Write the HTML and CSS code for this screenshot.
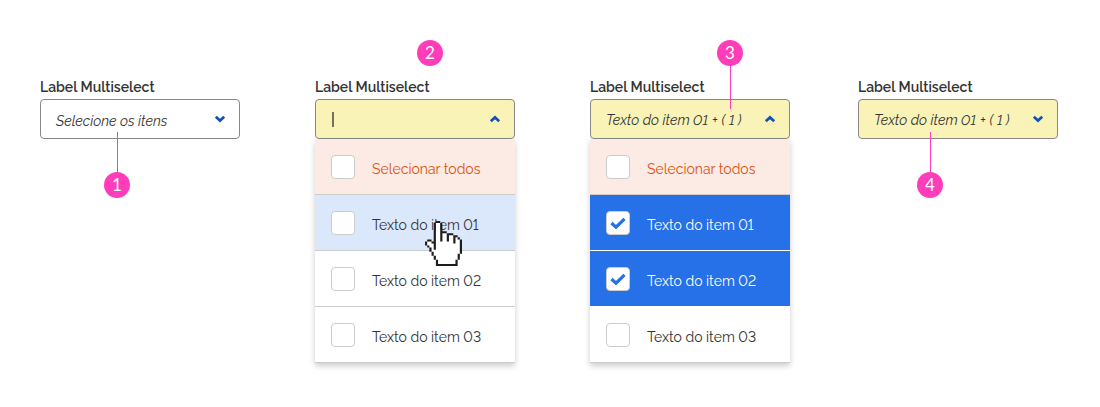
FILE: index.html
```html
<!DOCTYPE html>
<html lang="pt-BR">
<head>
<meta charset="utf-8">
<title>Multiselect</title>
<link rel="stylesheet" href="styles.css">
</head>
<body>
<svg class="defs" width="0" height="0">
  <symbol id="down" viewBox="0 0 12 8"><path d="M1.8 1.8 6 5.6l4.2-3.8" fill="none" stroke="#1351b4" stroke-width="2.7"/></symbol>
  <symbol id="up" viewBox="0 0 12 8"><path d="M1.8 6.2 6 2.4l4.2 3.8" fill="none" stroke="#1351b4" stroke-width="2.7"/></symbol>
  <symbol id="check" viewBox="0 0 16 12"><path d="M1.5 6 6 10.2 14.5 1.8" fill="none" stroke="#2670e8" stroke-width="3.2"/></symbol>
</svg>
<main class="board">
  <section class="select">
    <div class="label">Label Multiselect</div>
    <div class="field"><span class="value placeholder">Selecione os itens</span><svg class="chevron"><use href="#down"/></svg></div>
    <div class="pin below first"><i class="line"></i><b class="dot">1</b></div>
  </section>

  <section class="select">
    <div class="label">Label Multiselect</div>
    <div class="field filled"><span class="caret"></span><svg class="chevron"><use href="#up"/></svg></div>
    <div class="list">
      <div class="item all"><span class="box"></span><span class="text">Selecionar todos</span></div>
      <div class="item hover"><span class="box"></span><span class="text">Texto do item 01</span></div>
      <div class="item"><span class="box"></span><span class="text">Texto do item 02</span></div>
      <div class="item"><span class="box"></span><span class="text">Texto do item 03</span></div>
    </div>
    <div class="pin above second"><b class="dot">2</b></div>
    <svg class="hand" viewBox="0 0 17 22" preserveAspectRatio="none">
      <path fill="#fff" d="M5 1h2v5h3v1h3v1h2v1h1v7h-1v3h-1v2H6v-2H5v-2H4v-2H3v-2H2v-1H1v-2h2v1h1v1h1z"/>
      <path fill="#1d1d1d" d="M5 0h2v1H5zM4 1h1v13H4zM7 1h1v9H7zM8 5h2v1H8zM10 6h1v4h-1zM11 6h2v1h-2zM13 7h1v4h-1zM14 7h1v1h-1zM15 8h1v1h-1zM16 9h1v7h-1zM15 16h1v3h-1zM14 19h1v3h-1zM5 21h9v1H5zM5 19h1v2H5zM4 17h1v2H4zM3 15h1v2H3zM2 13h1v2H2zM1 12h1v1H1zM0 10h1v2H0zM1 9h2v1H1zM3 10h1v1H3z"/>
    </svg>
  </section>

  <section class="select">
    <div class="label">Label Multiselect</div>
    <div class="field filled"><span class="value">Texto do item <span class="num">01</span> + ( <span class="num">1</span> )</span><svg class="chevron"><use href="#up"/></svg></div>
    <div class="list">
      <div class="item all"><span class="box"></span><span class="text">Selecionar todos</span></div>
      <div class="item checked"><span class="box"><svg class="tick"><use href="#check"/></svg></span><span class="text">Texto do item 01</span></div>
      <div class="item checked"><span class="box"><svg class="tick"><use href="#check"/></svg></span><span class="text">Texto do item 02</span></div>
      <div class="item"><span class="box"></span><span class="text">Texto do item 03</span></div>
    </div>
    <div class="pin above third"><b class="dot">3</b><i class="line"></i></div>
  </section>

  <section class="select">
    <div class="label">Label Multiselect</div>
    <div class="field filled"><span class="value">Texto do item <span class="num">01</span> + ( <span class="num">1</span> )</span><svg class="chevron"><use href="#down"/></svg></div>
    <div class="pin below fourth"><i class="line"></i><b class="dot">4</b></div>
  </section>
</main>
</body>
</html>
```
FILE: styles.css
```css
* { box-sizing: border-box; }
body { margin: 0; background: #fff; color: #333; font-family: Raleway, Lato, sans-serif; font-variant-numeric: lining-nums; }
.defs { position: absolute; }
.board { display: flex; gap: 75px; height: 407px; padding: 77px 40px 0; }
.select { position: relative; flex: none; width: 200px; }
.select:last-child { margin-left: -7px; }
.label { height: 22px; font-size: 14px; font-weight: 600; line-height: 20px; white-space: nowrap; }
.field { display: flex; align-items: center; justify-content: space-between; height: 40px; padding: 0 13px 0 15px; border: 1px solid #888; border-radius: 4px; }
.filled { background: #faf3b7; }
.value { padding-top: 2px; font-size: 14px; font-style: italic; white-space: nowrap; }
.num { display: inline-block; font-style: normal; transform: skewX(-11deg); }
.placeholder { padding-top: 4px; }
.caret { width: 2px; height: 15px; margin-left: 1px; background: #77735a; }
.chevron { width: 12px; height: 8px; }
.list { box-shadow: 0 3px 6px rgba(0, 0, 0, .2); }
.item { display: flex; align-items: center; height: 56px; padding-left: 16px; border-bottom: 1px solid #ccc; background: #fff; font-size: 14px; }
.all { background: #fcebe4; color: #e0520f; }
.hover { background: #dbe8fb; }
.checked { border-color: #fff; background: #2670e8; color: #fff; }
.all:has(+ .checked) { border-color: #d8c8c4; }
.box { display: flex; align-items: center; justify-content: center; width: 24px; height: 24px; margin-right: 17px; border: 1px solid #ccc; border-radius: 4px; background: #fff; }
.tick { width: 16px; height: 12px; }
.text { padding-top: 4px; white-space: nowrap; }
.pin { position: absolute; display: flex; flex-direction: column; align-items: center; width: 26px; }
.below { top: 55px; }
.above { top: -37px; }
.first { left: 64px; }
.second { left: 102px; }
.third { left: 127px; }
.fourth { left: 59px; }
.line { width: 1px; height: 40px; background: #ff3dbb; }
.above .line { height: 43px; margin-left: 1px; }
.below .line { margin-left: 1px; }
.dot { width: 26px; height: 26px; border-radius: 50%; background: #ff3dbb; color: #fff; font: 400 17px/26px Lato, sans-serif; text-align: center; }
.hand { position: absolute; left: 110px; top: 144px; width: 37px; height: 45px; }
```
